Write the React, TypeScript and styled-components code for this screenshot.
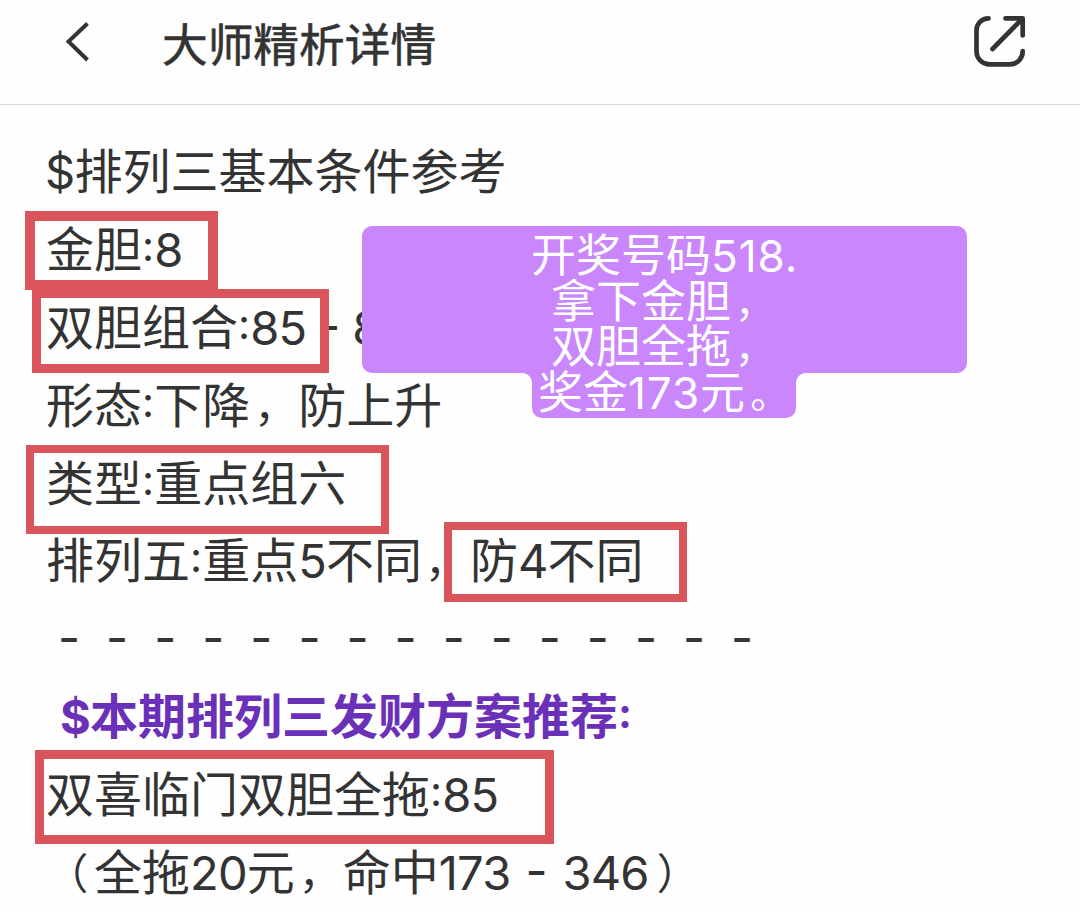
import React from 'react';
import styled, { createGlobalStyle } from 'styled-components';

const GlobalStyle = createGlobalStyle`
  body {
    margin: 0;
    background: #fefefe;
    overflow: hidden;
  }
`;

const App: React.FC = () => {
  return (
    <Page>
      <GlobalStyle />
      <Header>
        <BackIcon viewBox="0 0 28 44">
          <path d="M25.500 3.500 L6.500 21.500 L25.500 40" />
        </BackIcon>
        <Title>大师精析详情</Title>
        <ShareIcon viewBox="0 0 56 56">
          <path d="M14.500 4.400 A12 12 0 0 0 2.500 16.400 V37.500 A13 13 0 0 0 15.500 50.300 H36 A12.700 12.700 0 0 0 48.700 37.600 V37" />
          <path d="M31.500 4.400 H48.700 V21.500" />
          <path d="M48 5 L18.500 35" />
        </ShareIcon>
      </Header>
      <Article>
        <Line><Dollar>$</Dollar>排列三基本条件参考</Line>
        <Line>金胆<Colon>:</Colon><Num>8</Num></Line>
        <Line>双胆组合<Colon>:</Colon><Num>85</Num><Dash gap={12}>-</Dash><Num>8</Num></Line>
        <Line>形态<Colon>:</Colon>下降<Punct indent={4}>，</Punct>防上升</Line>
        <Line>类型<Colon>:</Colon>重点组六</Line>
        <Line>排列五<Colon>:</Colon>重点<Num>5</Num>不同<Punct indent={3}>，</Punct>防<Num>4</Num>不同</Line>
        <Rule>---------------</Rule>
        <Headline><Dollar>$</Dollar>本期排列三发财方案推荐<Colon>:</Colon></Headline>
        <Line>双喜临门双胆全拖<Colon>:</Colon><Num>85</Num></Line>
        <Line><Punct indent={0}>（</Punct>全拖<Num>20</Num>元<Punct indent={4}>，</Punct>命中<Num>173</Num><Dash gap={15}>-</Dash><Num>346</Num><Punct indent={8}>）</Punct></Line>
      </Article>
      <Mark left={25} top={211} width={193} height={79} thick={10} />
      <Mark left={32} top={289} width={297} height={84} thick={9} />
      <Mark left={26} top={445} width={363} height={89} thick={8} />
      <Mark left={444} top={522} width={243} height={80} thick={8} />
      <Mark left={35} top={750} width={519} height={94} thick={9} />
      <Note>
        <NoteShape>
          <NoteBody />
          <NoteTail />
        </NoteShape>
        <NoteText>
          <NoteLine shift={0}>开奖号码<NoteNum>518.</NoteNum></NoteLine>
          <NoteLine shift={20}>拿下金胆<Punct indent={4}>，</Punct></NoteLine>
          <NoteLine shift={20}>双胆全拖<Punct indent={4}>，</Punct></NoteLine>
          <NoteLine shift={7}>奖金<NoteNum>173</NoteNum>元<Punct indent={5}>。</Punct></NoteLine>
        </NoteText>
      </Note>
    </Page>
  );
};

export default App;

const Page = styled.div`
  position: relative;
  width: 1080px;
  height: 912px;
  overflow: hidden;
  background: #fefefe;
  color: #333;
  font-family: "Noto Sans CJK SC", sans-serif;
`;

const Header = styled.header`
  display: flex;
  align-items: flex-start;
  box-sizing: border-box;
  height: 105px;
  padding: 0 50px 0 62px;
  border-bottom: 1px solid #dcdcdc;
`;

const BackIcon = styled.svg`
  width: 28px;
  height: 44px;
  margin-top: 20px;
  fill: none;
  stroke: #333;
  stroke-width: 4;
`;

const Title = styled.h1`
  flex: 1;
  margin: 0 0 0 72px;
  font-size: 45.7px;
  font-weight: 400;
  line-height: 84px;
  -webkit-text-stroke: 0.6px #333;
`;

const ShareIcon = styled.svg`
  width: 56px;
  height: 56px;
  margin-top: 14px;
  fill: none;
  stroke: #333;
  stroke-width: 4.700;
  stroke-linecap: round;
  stroke-linejoin: round;
`;

const Article = styled.article`
  display: flex;
  flex-direction: column;
  padding: 24px 0 0 46px;
`;

const Line = styled.p`
  height: 77.9px;
  margin: 0;
  font-size: 48px;
  line-height: 78px;
  white-space: pre;
`;

const Headline = styled(Line)`
  padding-left: 15px;
  color: #6a31b8;
  font-weight: 700;
`;

const Rule = styled(Line)`
  padding-left: 12px;
  font-family: Inter, sans-serif;
  letter-spacing: 26px;
  line-height: 83px;
`;

const Num = styled.span`
  font-family: Inter, sans-serif;
  font-size: 0.98em;
  letter-spacing: -0.8px;
`;

const NoteNum = styled(Num)`
  letter-spacing: 0.9px;
`;

const Dollar = styled(Num)`
  margin-left: -1px;
`;

const Colon = styled.span`
  font-family: Inter, sans-serif;
  font-size: 42px;
  line-height: 0;
  vertical-align: 6px;
`;

// full-width punctuation, a bit smaller than its one-character cell
const Punct = styled.span<{ indent: number }>`
  display: inline-block;
  box-sizing: border-box;
  width: 1.136em;
  padding-left: ${p => p.indent}px;
  font-size: 0.88em;
  line-height: 1;
  vertical-align: 1px;
`;

const Dash = styled.span<{ gap: number }>`
  margin: 0 ${p => p.gap}px;
  font-family: Inter, sans-serif;
  line-height: 0;
  vertical-align: 2px;
`;

// highlight frame drawn over the text
const Mark = styled.div<{ left: number; top: number; width: number; height: number; thick: number }>`
  position: absolute;
  box-sizing: border-box;
  left: ${p => p.left}px;
  top: ${p => p.top}px;
  width: ${p => p.width}px;
  height: ${p => p.height}px;
  border: ${p => p.thick}px solid #da555b;
`;

const Note = styled.aside`
  position: absolute;
  left: 362px;
  top: 226px;
  display: grid;
  width: 605px;
  color: #fff;
`;

const NoteShape = styled.div`
  display: flex;
  flex-direction: column;
  align-items: flex-start;
  grid-area: 1 / 1;
`;

const NoteBody = styled.div`
  width: 100%;
  height: 147px;
  border-radius: 10px;
  background: #ca86fb;
`;

const NoteTail = styled.div`
  position: relative;
  width: 264px;
  height: 45px;
  margin-left: 170px;
  border-radius: 0 0 10px 10px;
  background: #ca86fb;

  &::before,
  &::after {
    content: '';
    position: absolute;
    top: 0;
    width: 10px;
    height: 10px;
  }

  &::before {
    left: -10px;
    background: radial-gradient(circle at 0 100%, transparent 9.5px, #ca86fb 10.5px);
  }

  &::after {
    right: -10px;
    background: radial-gradient(circle at 100% 100%, transparent 9.5px, #ca86fb 10.5px);
  }
`;

const NoteText = styled.div`
  z-index: 1;
  display: flex;
  flex-direction: column;
  grid-area: 1 / 1;
  padding: 4px 0 0 169px;
`;

const NoteLine = styled.div<{ shift: number }>`
  height: 45.6px;
  padding-left: ${p => p.shift}px;
  font-size: 45px;
  line-height: 46px;
  white-space: pre;
`;
